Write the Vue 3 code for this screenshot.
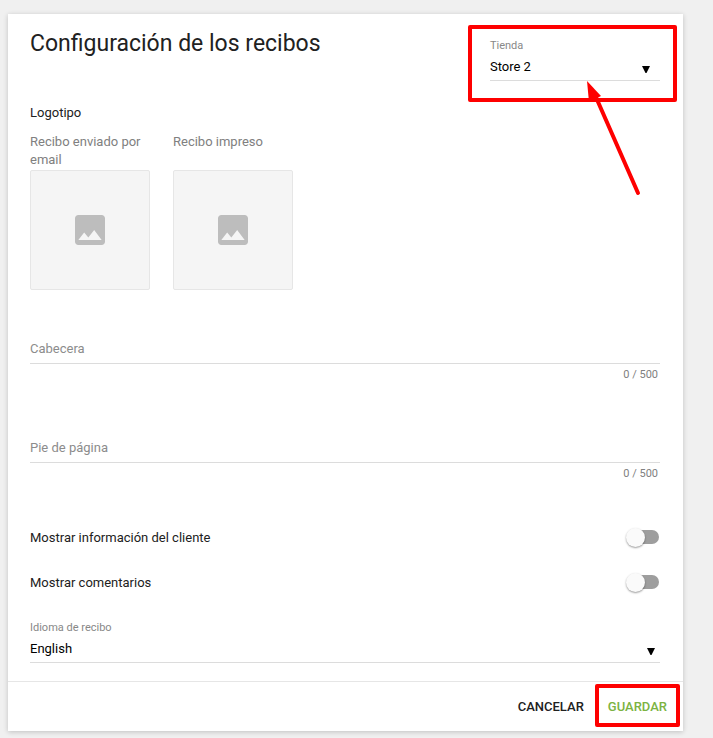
<template>
  <form class="card" @submit.prevent="save">
    <div class="content">
      <header class="header">
        <h1>Configuración de los recibos</h1>
        <div class="field store">
          <label for="store">Tienda</label>
          <div class="select-box">
            <select id="store" v-model="settings.store">
              <option v-for="store in stores" :key="store">{{ store }}</option>
            </select>
            <svg class="caret" viewBox="0 0 8 7"><path d="M0 0h8L4.500 7h-1z" /></svg>
          </div>
          <div class="highlight highlight-store"></div>
          <svg class="pointer" viewBox="0 0 56 118">
            <path d="M9 14L52 112" stroke="#fe0000" stroke-width="4" stroke-linecap="round" />
            <path d="M1 0L15 15L3 21z" fill="#fe0000" />
          </svg>
        </div>
      </header>

      <section class="logos">
        <h2>Logotipo</h2>
        <div class="logo-list">
          <div v-for="logo in logos" :key="logo" class="logo">
            <p>{{ logo }}</p>
            <button type="button" class="upload" :aria-label="logo">
              <svg viewBox="3 3 18 18">
                <path d="M21 19V5c0-1.100-.900-2-2-2H5c-1.100 0-2 .900-2 2v14c0 1.100.900 2 2 2h14c1.100 0 2-.900 2-2zM8.500 13.500l2.500 3.010L14.500 12l4.500 6H5l3.500-4.500z" />
              </svg>
            </button>
          </div>
        </div>
      </section>

      <div v-for="text in texts" :key="text.id" class="text-field">
        <input :id="text.id" v-model="settings[text.id]" type="text" maxlength="500" :placeholder="text.label" :aria-label="text.label">
        <span class="counter">{{ settings[text.id].length }} / 500</span>
      </div>

      <div class="switches">
        <div v-for="item in switches" :key="item.id" class="switch-row">
          <label :for="item.id">{{ item.label }}</label>
          <input :id="item.id" v-model="settings[item.id]" type="checkbox" class="switch">
        </div>
      </div>

      <div class="field language">
        <label for="language">Idioma de recibo</label>
        <div class="select-box">
          <select id="language" v-model="settings.language">
            <option v-for="language in languages" :key="language">{{ language }}</option>
          </select>
          <svg class="caret" viewBox="0 0 8 7"><path d="M0 0h8L4.500 7h-1z" /></svg>
        </div>
      </div>
    </div>

    <footer class="footer">
      <button type="button" @click="reset">CANCELAR</button>
      <button type="submit" class="save">
        GUARDAR
        <span class="highlight highlight-save"></span>
      </button>
    </footer>
  </form>
</template>

<script setup>
import { ref } from 'vue';

const stores = ['Store 1', 'Store 2'];
const languages = ['English', 'Español'];
const logos = ['Recibo enviado por email', 'Recibo impreso'];

const texts = [
  { id: 'headerText', label: 'Cabecera' },
  { id: 'footerText', label: 'Pie de página' }
];

const switches = [
  { id: 'showCustomer', label: 'Mostrar información del cliente' },
  { id: 'showComments', label: 'Mostrar comentarios' }
];

const defaults = {
  store: 'Store 2',
  headerText: '',
  footerText: '',
  showCustomer: false,
  showComments: false,
  language: 'English'
};

const settings = ref({ ...defaults });
const saved = ref({ ...defaults });

const save = () => {
  saved.value = { ...settings.value };
};

const reset = () => {
  settings.value = { ...saved.value };
};
</script>

<style>
body {
  background-color: #f0f0f0;
}
</style>

<style scoped>
.card {
  margin: 14px 30px 7px 8px;
  background-color: #fff;
  box-shadow: 0 1px 5px rgba(0, 0, 0, 0.2);
  color: #212121;
  font-family: Roboto, "Liberation Sans", sans-serif;
  font-size: 13px;
  line-height: 18px;
}

.content {
  padding: 24px 23px 18px 22px;
}

h1,
h2,
p {
  margin: 0;
  font-size: 13px;
  font-weight: 400;
}

.header {
  display: flex;
  align-items: flex-start;
  justify-content: space-between;
}

.header h1 {
  margin-top: -8px;
  font-size: 23px;
  line-height: 28px;
}

.field {
  display: flex;
  flex-direction: column;
}

.field label {
  color: #888;
  font-size: 11px;
  line-height: 16px;
}

.select-box {
  position: relative;
  border-bottom: 1px solid #dcdcdc;
}

select {
  display: block;
  width: 100%;
  height: 26px;
  padding: 0;
  border: none;
  appearance: none;
  background: none;
  color: #000;
  font: inherit;
}

.caret {
  position: absolute;
  top: 12px;
  right: 5px;
  width: 8px;
  height: 7px;
  pointer-events: none;
}

.store {
  position: relative;
  flex: 0 0 27%;
}

.store .caret {
  right: 10px;
}

.highlight {
  position: absolute;
  border: 4px solid #fe0000;
  border-radius: 2px;
  pointer-events: none;
}

.highlight-store {
  top: -13px;
  right: -17px;
  bottom: -21px;
  left: -22px;
}

.pointer {
  position: absolute;
  top: 43px;
  right: 18px;
  width: 56px;
  height: 118px;
  fill: none;
  pointer-events: none;
}

.logos {
  margin-top: 23px;
}

.logo-list {
  display: flex;
  gap: 23px;
  margin-top: 11px;
}

.logo {
  display: flex;
  flex-direction: column;
  justify-content: space-between;
  gap: 1px;
  width: 120px;
}

.logo p {
  color: #808080;
}

.upload {
  display: flex;
  align-items: center;
  justify-content: center;
  height: 120px;
  padding: 0;
  border: 1px solid #e6e6e6;
  border-radius: 2px;
  background-color: #f5f5f5;
  cursor: pointer;
}

.upload svg {
  width: 30px;
  height: 30px;
  fill: #bdbdbd;
}

.text-field {
  display: flex;
  flex-direction: column;
  margin-top: 50px;
}

.logos + .text-field {
  margin-top: 44px;
}

.text-field input {
  height: 29px;
  padding: 0;
  border: none;
  border-bottom: 1px solid #dcdcdc;
  outline: none;
  background: none;
  color: #212121;
  font: inherit;
}

.text-field input::placeholder {
  color: #8c8c8c;
  opacity: 1;
}

.counter {
  align-self: flex-end;
  margin: 3px 2px 0 0;
  color: #808080;
  font-size: 11px;
  line-height: 16px;
}

.switches {
  display: flex;
  flex-direction: column;
  gap: 21px;
  margin-top: 44px;
}

.switch-row {
  display: flex;
  align-items: center;
  justify-content: space-between;
  height: 24px;
}

.switch {
  display: flex;
  align-items: center;
  width: 32px;
  height: 14px;
  margin: 0 1px 2px 0;
  border-radius: 7px;
  appearance: none;
  background-color: #9e9e9e;
  cursor: pointer;
}

.switch::before {
  content: "";
  width: 19px;
  height: 19px;
  flex: none;
  margin-left: -1px;
  border-radius: 50%;
  background-color: #fafafa;
  box-shadow: 0 1px 2px rgba(0, 0, 0, 0.4);
}

.switch:checked {
  background-color: #aed581;
}

.switch:checked::before {
  margin-left: 14px;
  background-color: #7cb342;
}

.language {
  margin-top: 25px;
}

.footer {
  display: flex;
  align-items: center;
  justify-content: flex-end;
  gap: 8px;
  padding: 7px 8px 6px;
  border-top: 1px solid #e6e6e6;
}

.footer button {
  position: relative;
  height: 36px;
  padding: 0 8px;
  border: none;
  background: none;
  color: #212121;
  font: inherit;
  font-weight: 500;
  cursor: pointer;
}

.footer .save {
  color: #7cb342;
}

.highlight-save {
  top: -5px;
  right: -5px;
  bottom: -2px;
  left: -5px;
}
</style>
